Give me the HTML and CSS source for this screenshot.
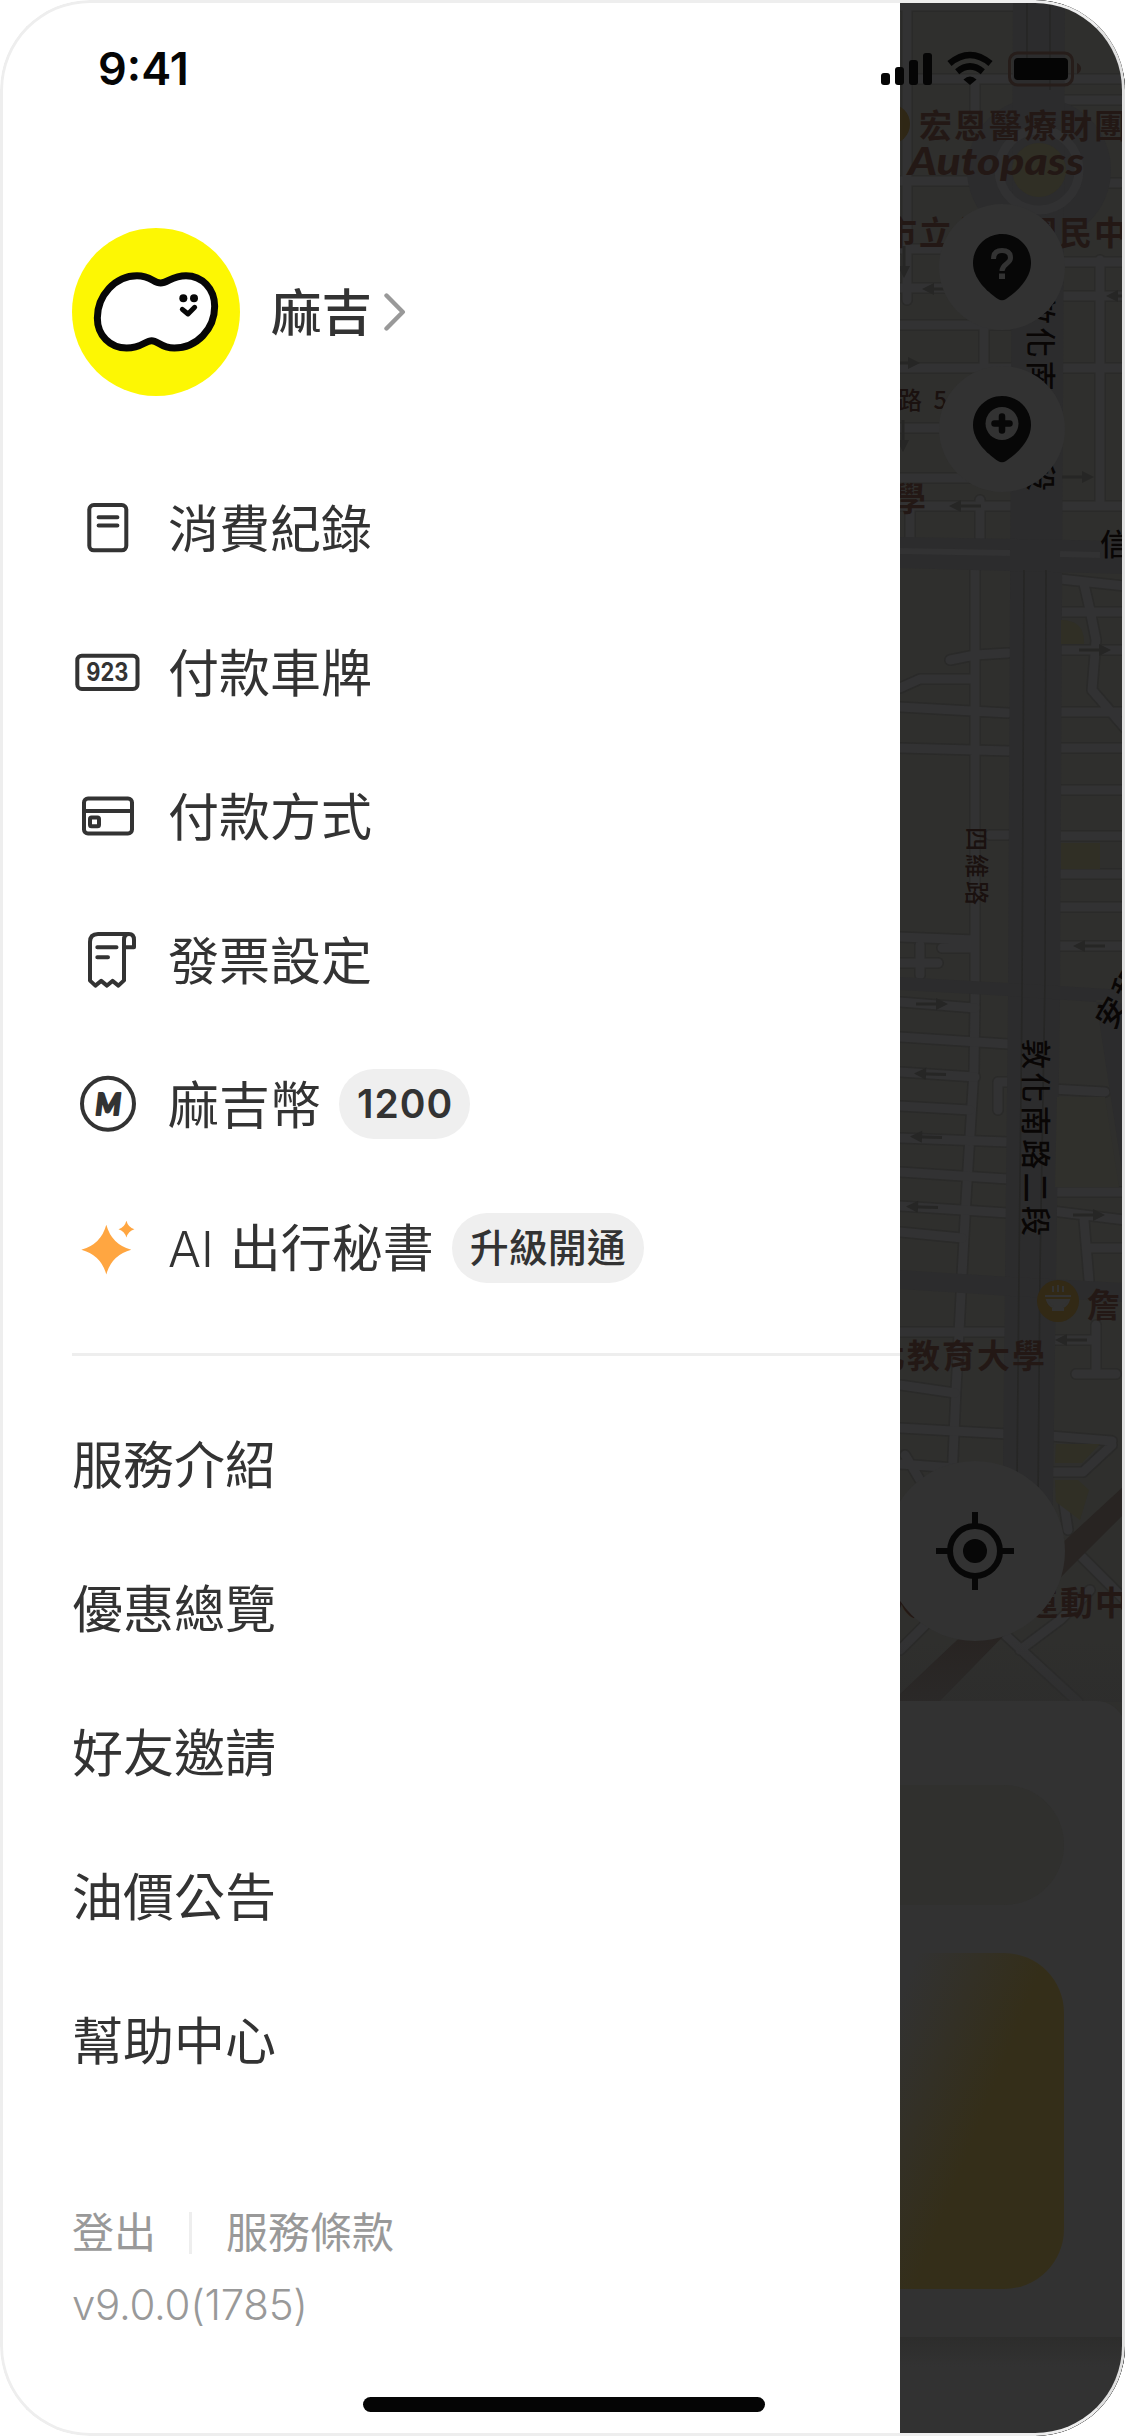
FILE: index.html
```html
<!DOCTYPE html>
<html lang="zh-Hant">
<head>
<meta charset="utf-8">
<title>Autopass</title>
<link rel="stylesheet" href="styles.css">
</head>
<body>
<div class="phone">
  <aside class="drawer">
    <header class="profile">
      <svg class="avatar" viewBox="18 18 504 504">
        <circle cx="270" cy="270" r="252" fill="#fdf703"/>
        <path d="M94 288C94 220 148 161 213 161C255 161 262 183 284 183C306 183 318 161 360 161C408 161 446 200 446 253C446 322 392 378 325 378C284 378 276 356 257 356C238 356 226 378 182 378C132 378 94 340 94 288Z" fill="#fff" stroke="#070707" stroke-width="21"/>
        <circle cx="352" cy="229" r="12" fill="#070707"/>
        <circle cx="384" cy="229" r="12" fill="#070707"/>
        <path d="M349 262L366 276L386 256" fill="none" stroke="#070707" stroke-width="15" stroke-linecap="round" stroke-linejoin="round"/>
      </svg>
      <span class="name">麻吉</span>
      <svg class="chevron" viewBox="0 0 22 38"><path d="M2.5 2.5L18.8 19L2.5 35.5" fill="none" stroke="#999" stroke-width="4.4" stroke-linecap="round" stroke-linejoin="round"/></svg>
    </header>

    <nav class="menu">
      <a class="row">
        <svg class="icon" viewBox="0 0 72 72"><rect x="17.3" y="13" width="37" height="45.3" rx="4.5"/><path d="M26.6 25.2H45.4M26.6 33.5H45.4"/></svg>
        <span class="label">消費紀錄</span>
      </a>
      <a class="row">
        <svg class="icon" viewBox="0 0 72 72"><rect x="5.3" y="19.7" width="60.2" height="33.3" rx="4.5"/><text class="plate" x="14.3" y="45.2" textLength="42" lengthAdjust="spacingAndGlyphs">923</text></svg>
        <span class="label">付款車牌</span>
      </a>
      <a class="row">
        <svg class="icon" viewBox="0 0 72 72"><rect x="12" y="18.5" width="48" height="35" rx="4"/><path d="M12 31H60"/><rect x="18" y="37.5" width="9" height="8.7" rx="1.5"/></svg>
        <span class="label">付款方式</span>
      </a>
      <a class="row">
        <svg class="icon" viewBox="0 0 72 72"><path d="M57 10H26Q18 10 18 18V56.6L23.4 61.6L29.2 56.9L35 61.6L40.5 56.9L46.4 61.6L52 56.4V16Q52 10 57 10Q62 10 62 16V23.2H53M25.3 23.3H44.5M25.3 33.3H36"/></svg>
        <span class="label">發票設定</span>
      </a>
      <a class="row">
        <svg class="icon" viewBox="0 0 72 72"><circle cx="36" cy="35.8" r="26"/><text class="coin" x="23.6" y="46.5" textLength="25.5" lengthAdjust="spacingAndGlyphs">M</text></svg>
        <span class="label">麻吉幣</span>
        <span class="pill pill-number">1200</span>
      </a>
      <a class="row">
        <svg class="icon" viewBox="0 0 72 72"><path class="spark" d="M34.3 12.7Q39.6 32.4 59.3 37.7Q39.6 43 34.3 62.5Q29 43 9.3 37.7Q29 32.4 34.3 12.7ZM54.4 8.7Q56.2 15.4 62.4 17.2Q56.2 19 54.4 25.5Q52.6 19 46.5 17.2Q52.6 15.4 54.4 8.7Z"/></svg>
        <span class="label"><span class="latin">AI</span>出行秘書</span>
        <span class="pill">升級開通</span>
      </a>
    </nav>

    <nav class="menu links">
      <a class="row"><span class="label">服務介紹</span></a>
      <a class="row"><span class="label">優惠總覽</span></a>
      <a class="row"><span class="label">好友邀請</span></a>
      <a class="row"><span class="label">油價公告</span></a>
      <a class="row"><span class="label">幫助中心</span></a>
    </nav>

    <footer class="footer">
      <div class="legal"><a>登出</a><i class="bar"></i><a>服務條款</a></div>
      <div class="version">v9.0.0(1785)</div>
    </footer>
  </aside>

  <svg class="scene" viewBox="900 0 225 2436">
    <defs>
      <linearGradient id="card" gradientUnits="userSpaceOnUse" x1="890" y1="2020" x2="1003" y2="2065"><stop offset="0" stop-color="#323232"/><stop offset="1" stop-color="#342e19"/></linearGradient>
      <linearGradient id="fade" x1="0" y1="0" x2="0" y2="1"><stop offset="0" stop-color="#2d2d2c"/><stop offset="1" stop-color="#323232"/></linearGradient>
      <linearGradient id="haze" x1="0" y1="0" x2="0" y2="1"><stop offset="0" stop-color="#2c2c2c" stop-opacity="0"/><stop offset="1" stop-color="#2c2c2c" stop-opacity=".6"/></linearGradient>
      <g id="oneway"><path d="M-16 0H10" stroke="#262625" stroke-width="3"/><path d="M4 -6L16 0L4 6Z" fill="#262625"/></g>
      <g id="streets" fill="none" stroke-linejoin="round" stroke-linecap="round">
        <path d="M900 6H1020M900 79H1125M900 181H970M907 0V300M975 80V110M900 249H960M900 288H1010M900 325H1010M900 368H1125M984 325V368M900 428H1010M900 478H1010M900 506H1125M910 510V540M980 500V540M1062 100H1125M1062 183H1120M1062 262H1125M1062 296H1125M1100 260V506"/>
        <path d="M975 568V1000L974 1070L966 1200L962 1275L956 1390L952 1480M900 688L920 679H975M950 660L975 655L1008 653M900 707L1008 713M900 748L1010 751M900 937L975 940M942 948H975M920 945V975M900 963H938M990 835H1008"/>
        <path d="M1060 579L1125 586M1084 584L1090 610L1096 640L1092 690L1125 728M1060 612H1125M1060 650H1125M1060 712H1125M1060 748H1125M1060 790H1125M1060 836H1125M1060 874H1125M1060 907H1125M1060 946H1125"/>
        <path d="M900 1002L975 1008M900 1037L1008 1044M900 1072L975 1077M900 1106L970 1110M900 1138L1008 1142M900 1172L1008 1179M900 1206L1008 1213M900 1232L962 1238M900 1332H1008M900 1385L955 1393M900 1428L1008 1434M900 1464L955 1468M905 1455L920 1480M1010 1082H998V1110M1052 1089L1105 1092M1052 1192H1125M1052 1211L1125 1220M1084 1220L1089 1280M1090 1248H1125M1052 1340H1096M1096 1325V1374M1076 1374H1116M1050 1436L1112 1441M1050 1472H1083L1112 1445M1062 1490L1068 1530M1080 1555L1125 1600M1090 1590L1060 1620L1020 1650M1000 1630L1078 1702M900 1650L930 1620"/>
      </g>
    </defs>
    <rect x="900" width="225" height="2436" fill="#2f2f2d"/>

    <use href="#streets" class="edge"/>
    <use href="#streets" class="road"/>

    <g fill="#2c2c2d">
      <circle cx="1039" cy="170" r="72"/>
      <path d="M1013 0H1065L1060 1000L1052 1560H1002L1008 1000Z"/>
      <path d="M900 537L1125 541V574L900 568ZM900 977L1008 983L1125 990V1004L1008 996L900 990ZM900 1270L1010 1277L1125 1283V1302L1010 1296L900 1289ZM1096 1000L1125 1190V1000Z"/>
    </g>
    <path d="M900 551L1010 553M1060 554L1100 555" stroke="#323233" stroke-width="6"/>
    <path d="M1027 0V80M1050 0V90M1024 570L1022 1000L1019 1270L1017 1480M1046 570L1045 980L1040 1270L1038 1500" fill="none" stroke="#262625" stroke-width="1.6"/>
    <circle cx="1039" cy="170" r="40" fill="none" stroke="#313132" stroke-width="9"/>
    <g fill="#302f25">
      <circle cx="1039" cy="170" r="27"/>
      <path d="M1061 620Q1085 620 1084 644H1061ZM1061 843H1100V869H1061ZM1056 1444H1100L1082 1463H1055ZM1055 1480H1078L1089 1490L1080 1520L1056 1502Z"/>
    </g>
    <path d="M1057 1097H1105L1119 1187H1055Z" fill="#30302c"/>
    <path d="M1125 1485L955 1642L900 1694V1702H939L1065 1573L1125 1513Z" fill="#282422"/>

    <g>
      <use href="#oneway" transform="translate(904 262) rotate(90)"/>
      <use href="#oneway" transform="translate(938 289) rotate(180)"/>
      <use href="#oneway" transform="translate(1122 296) rotate(180)"/>
      <use href="#oneway" x="904" y="363"/>
      <use href="#oneway" transform="translate(903 436) rotate(90)"/>
      <use href="#oneway" x="1078" y="477"/>
      <use href="#oneway" transform="translate(965 506) rotate(180)"/>
      <use href="#oneway" x="1095" y="650"/>
      <use href="#oneway" transform="translate(1089 946) rotate(180)"/>
      <use href="#oneway" x="932" y="1004"/>
      <use href="#oneway" transform="translate(930 1074) rotate(182)"/>
      <use href="#oneway" transform="translate(926 1137) rotate(182)"/>
      <use href="#oneway" transform="translate(922 1207) rotate(182)"/>
      <use href="#oneway" x="1089" y="1215"/>
      <use href="#oneway" transform="translate(1071 1340) rotate(180)"/>
    </g>

    <g class="place">
      <circle cx="890" cy="124" r="20" fill="#2f2715"/>
      <text x="919" y="138">宏恩醫療財團</text>
      <text x="884" y="245">市立仁愛國民中</text>
      <text x="858" y="511">大學</text>
      <text x="872" y="1368">北教育大學</text>
      <text x="1087" y="1317">詹</text>
      <text x="885" y="1615">大安國民運動中</text>
    </g>
    <text class="brand" x="908" y="175" textLength="176" lengthAdjust="spacingAndGlyphs">Autopass</text>
    <g class="street">
      <text class="small" x="898" y="409">路 51</text>
      <text class="small" transform="translate(968 827) rotate(90)">四維路</text>
      <text transform="translate(1030 294) rotate(90)">敦化南路二段</text>
      <text transform="translate(1025 1039) rotate(90)">敦化南路二段</text>
      <text x="1100" y="555">信義</text>
      <text transform="translate(1113 1031) rotate(-60)">安和</text>
    </g>
    <g>
      <circle cx="1058" cy="1301" r="21" fill="#322915"/>
      <path d="M1045 1296H1071M1047 1300H1069Q1067 1306 1063 1307V1310H1053V1307Q1049 1306 1047 1300Z" fill="#323232" stroke="#323232" stroke-width="2"/>
      <path d="M1053 1292V1286M1058 1292V1285M1063 1292V1286" stroke="#323232" stroke-width="2"/>
    </g>
    <rect x="900" y="1640" width="225" height="62" fill="url(#haze)"/>

    <g fill="#323232">
      <circle cx="1002" cy="267" r="63"/>
      <circle cx="1002" cy="429" r="63"/>
      <circle cx="975" cy="1551" r="90"/>
      <path d="M900 1701H1096Q1116 1701 1125 1722V2436H900Z"/>
    </g>
    <g fill="#070707">
      <path d="M1002 234C1018 234 1031 247 1031 263C1031 278 1018 291 1006 299Q1002 301.500 998 299C986 291 973 278 973 263C973 247 986 234 1002 234Z"/>
      <path d="M1002 396C1018 396 1031 409 1031 425C1031 440 1018 453 1006 461Q1002 463.500 998 461C986 453 973 440 973 425C973 409 986 396 1002 396Z"/>
    </g>
    <path d="M993.500 259Q993.500 250.500 1002 250.500Q1010.500 250.500 1010.500 258C1010.500 264 1002 263.500 1002 271" fill="none" stroke="#323232" stroke-width="5"/>
    <rect x="999" y="273.500" width="6" height="5.500" fill="#323232"/>
    <circle cx="1002" cy="423.500" r="16.500" fill="#323232"/>
    <path d="M994.500 423.500H1009.500M1002 416.500V430.500" stroke="#070707" stroke-width="6.500" stroke-linecap="round"/>
    <circle cx="975" cy="1551" r="25" fill="none" stroke="#070707" stroke-width="6"/>
    <circle cx="975" cy="1551" r="12" fill="#070707"/>
    <path d="M936 1551H948M1002 1551H1014M975 1512V1524M975 1578V1590" stroke="#070707" stroke-width="6"/>

    <path d="M900 1785H1004A60 60 0 0 1 1004 1905H900Z" fill="#30302e"/>
    <path d="M900 1953H1004A60 60 0 0 1 1064 2013V2229A60 60 0 0 1 1004 2289H900Z" fill="url(#card)"/>
    <rect x="900" y="2337" width="225" height="30" fill="url(#fade)"/>
  </svg>

  <div class="status">
    <span class="time">9:41</span>
    <svg class="signals" viewBox="880 50 204 38">
      <g fill="#050505">
        <rect x="881" y="73" width="9" height="12" rx="3"/>
        <rect x="895" y="67" width="9" height="18" rx="3"/>
        <rect x="909" y="60" width="9" height="25" rx="3"/>
        <rect x="923" y="53" width="9" height="32" rx="3"/>
        <path d="M963.500 79.500Q970 73.500 976.500 79.500L970 85Z"/>
      </g>
      <path d="M949.500 63.500Q970 46.500 990.500 63.500M957.200 71.700Q970 61 982.800 71.700" fill="none" stroke="#050505" stroke-width="6.400"/>
      <rect x="1009.500" y="53" width="63" height="32" rx="8" fill="none" stroke="#261d1a" stroke-width="3"/>
      <rect x="1014" y="58" width="54" height="22" rx="4" fill="#050505"/>
      <path d="M1077 63Q1081 65 1081 68.500Q1081 72 1077 74Z" fill="#261d1a"/>
    </svg>
  </div>
  <div class="frame"></div>
  <div class="home"></div>
</div>
</body>
</html>
```
FILE: styles.css
```css
* { box-sizing: border-box; }

body {
  margin: 0;
  background: #fff;
  color: #333;
  font-family: Inter, "Noto Sans CJK TC", sans-serif;
}

.phone {
  position: relative;
  display: flex;
  width: 1125px;
  height: 2436px;
  overflow: hidden;
  border-radius: 90px;
  background: #fff;
}

.drawer {
  display: flex;
  flex-direction: column;
  width: 900px;
  padding: 228px 0 0 72px;
}

.scene { display: block; width: 225px; height: 2436px; }

.profile { display: flex; align-items: center; height: 168px; }
.avatar { width: 168px; height: 168px; }
.name { margin-left: 31px; padding-top: 2px; font-size: 50.5px; font-weight: 500; line-height: 72px; }
.chevron { width: 22px; height: 38px; margin-left: 12px; }

.menu {
  display: flex;
  flex-direction: column;
  padding: 60px 0 33px;
  border-bottom: 3px solid #eee;
}
.row {
  display: flex;
  align-items: center;
  height: 144px;
  font-size: 51px;
  font-weight: 400;
  line-height: 72px;
}
.label { padding-top: 3px; }
.links { padding: 36px 0 0; border: 0; }

.icon {
  width: 72px;
  height: 72px;
  margin-right: 24px;
  fill: none;
  stroke: #333;
  stroke-width: 4;
  stroke-linecap: round;
  stroke-linejoin: round;
}
.icon text { fill: #333; stroke: none; }
.plate { font: 700 25px Inter, sans-serif; }
.coin { font: italic 900 30px Lato, sans-serif; }
.icon .coin { stroke: #333; stroke-width: 2; }
.spark { fill: #ffa641; stroke: none; }
.latin { margin-right: 16px; font-size: 49px; font-weight: 350; }

.pill {
  height: 70px;
  margin-left: 18px;
  padding: 0 18px;
  border-radius: 35px;
  background: #efefef;
  font-size: 39px;
  font-weight: 500;
  line-height: 69px;
}
.pill-number { padding-right: 17px; font-weight: 600; line-height: 70px; letter-spacing: 1px; }

.footer {
  display: flex;
  flex-direction: column;
  padding-top: 91px;
  color: #999;
  font-size: 42px;
  font-weight: 400;
  line-height: 60px;
}
.legal { display: flex; align-items: center; gap: 33px; height: 60px; }
.legal a:last-child { padding-left: 1px; }
.bar { width: 3px; height: 42px; background: #eee; }
.version { height: 60px; margin-top: 12px; font-weight: 350; letter-spacing: -0.3px; }

.status {
  position: absolute;
  top: 50px;
  left: 0;
  display: flex;
  justify-content: space-between;
  width: 1084px;
  padding-left: 98px;
}
.time { color: #050505; font-size: 45px; font-weight: 600; line-height: 38px; }
.signals { width: 204px; height: 38px; }

.frame {
  position: absolute;
  inset: 0;
  border: 3px solid #eee;
  border-right-color: #e0e0e0;
  border-radius: 90px;
}
.home {
  position: absolute;
  bottom: 24px;
  left: 363px;
  width: 402px;
  height: 15px;
  border-radius: 8px;
  background: #050505;
}

.edge { stroke: #2a2a29; stroke-width: 12px; }
.road { stroke: #323233; stroke-width: 9px; }
.place text { fill: #231815; font: 700 33px "Noto Sans CJK TC", sans-serif; letter-spacing: 2px; }
.street text { fill: #090605; font: 500 30px "Noto Sans CJK TC", sans-serif; letter-spacing: 3.4px; }
.street .small { fill: #1a110f; font-size: 24px; letter-spacing: 3px; }
.brand { fill: #231815; font: italic 900 38px Lato, sans-serif; }
```
